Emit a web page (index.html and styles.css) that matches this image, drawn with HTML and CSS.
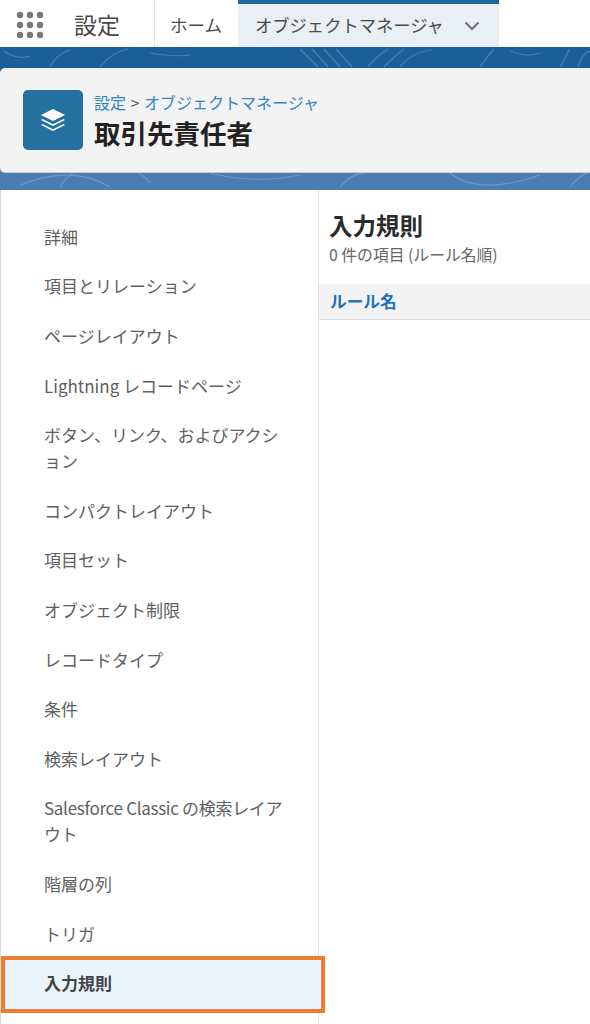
FILE: index.html
```html
<html lang="ja">

<head>
    <meta charset="UTF-8">
    <title>設定</title>
    <link rel="stylesheet" href="styles.css">
</head>

<body>
    <div class="topbar">
        <div class="launcher">
            <svg width="30" height="30" viewBox="0 0 30 30">
                <g fill="#787878">
                    <circle cx="5" cy="5" r="3.2"/><circle cx="15" cy="5" r="3.2"/><circle cx="25" cy="5" r="3.2"/>
                    <circle cx="5" cy="15" r="3.2"/><circle cx="15" cy="15" r="3.2"/><circle cx="25" cy="15" r="3.2"/>
                    <circle cx="5" cy="25" r="3.2"/><circle cx="15" cy="25" r="3.2"/><circle cx="25" cy="25" r="3.2"/>
                </g>
            </svg>
        </div>
        <div class="app-name">設定</div>
        <div class="tab">ホーム</div>
        <div class="tab tab-active">
            <span>オブジェクトマネージャ</span>
            <svg class="chevron" width="16" height="10" viewBox="0 0 16 10">
                <path d="M1.5 1.5 L8 8 L14.5 1.5" fill="none" stroke="#6b6f73" stroke-width="2"/>
            </svg>
        </div>
    </div>

    <div class="stage">
        <svg class="contours" width="590" height="143" viewBox="0 0 590 143">
            <g fill="none" stroke="#ffffff" stroke-opacity="0.2" stroke-width="1.2">
                <path d="M4 4 C12 10 20 12 30 9 M50 20 C54 12 60 6 70 3 M100 20 C108 10 118 4 128 2 M150 6 C162 8 176 10 190 8"/>
                <path d="M300 2 L318 20 M312 2 L328 20 M324 2 L340 20 M336 2 L352 20 M368 20 C374 12 382 6 388 2 M384 20 C392 12 398 6 404 2 M400 20 C408 10 420 4 432 3"/>
                <path d="M480 20 C486 12 490 6 494 2 M510 4 C520 8 530 10 540 6 M560 20 C566 12 566 6 570 2 M578 20 C580 12 584 6 590 4"/>
                <path d="M20 138 C60 122 90 128 110 140 M60 140 C76 110 130 110 150 136 M210 126 C240 134 270 134 300 128 M340 140 C350 128 360 124 372 126 M450 126 C470 142 500 142 540 128 M570 140 C578 130 584 126 590 124"/>
            </g>
        </svg>

        <div class="page-head">
            <div class="object-icon">
                <svg width="28" height="28" viewBox="0 0 28 28">
                    <path d="M14 3 L26 9 L14 15 L2 9 Z" fill="#fff"/>
                    <path d="M3.5 13 L14 18.2 L24.5 13 L26 14 L14 20 L2 14 Z" fill="#fff"/>
                    <path d="M3.5 18 L14 23.2 L24.5 18 L26 19 L14 25 L2 19 Z" fill="#fff"/>
                </svg>
            </div>
            <div class="head-text">
                <div class="crumbs"><a>設定</a> <span class="sep">&gt;</span> <a>オブジェクトマネージャ</a></div>
                <div class="object-title">取引先責任者</div>
            </div>
        </div>

        <div class="content">
            <ul class="side-nav">
                <li>詳細</li>
                <li>項目とリレーション</li>
                <li>ページレイアウト</li>
                <li>Lightning レコードページ</li>
                <li>ボタン、リンク、およびアクション</li>
                <li>コンパクトレイアウト</li>
                <li>項目セット</li>
                <li>オブジェクト制限</li>
                <li>レコードタイプ</li>
                <li>条件</li>
                <li>検索レイアウト</li>
                <li class="latin-tight">Salesforce Classic の検索レイアウト</li>
                <li>階層の列</li>
                <li>トリガ</li>
                <li class="current">入力規則</li>
            </ul>
            <div class="main">
                <div class="main-head">
                    <h2>入力規則</h2>
                    <p>0 件の項目 (ルール名順)</p>
                </div>
                <div class="table-head">ルール名</div>
            </div>
        </div>
    </div>
</body>

</html>
```

FILE: styles.css
```css
* {
    box-sizing: border-box;
}

body {
    margin: 0;
    width: 590px;
    height: 1024px;
    overflow: hidden;
    background: #fff;
    font-family: "Noto Sans CJK JP", "Noto Sans", sans-serif;
    color: #606060;
}

.topbar {
    display: flex;
    height: 47px;
    background: #fff;
}

.launcher {
    width: 74px;
    padding: 10px 0 0 15px;
}

.app-name {
    width: 80px;
    font-size: 23px;
    line-height: 48px;
    color: #4a4a4a;
}

.tab {
    width: 84px;
    border-left: 1px solid #e4e4e4;
    font-size: 17.5px;
    line-height: 50px;
    padding-left: 15px;
    color: #4a4a4a;
}

.tab-active {
    display: flex;
    align-items: flex-start;
    width: 261px;
    background: #e9eff3;
    border-top: 4px solid #20699c;
    border-left: 0;
    padding-left: 17px;
    font-size: 17.3px;
    line-height: 42px;
    white-space: nowrap;
}

.chevron {
    margin: 17px 0 0 20px;
}

.stage {
    position: relative;
    height: 977px;
    padding-top: 21px;
    background: linear-gradient(#1a5f98 0, #1a5f98 20px, #4a7db3 100px, #4a7db3 143px);
}

.contours {
    position: absolute;
    left: 0;
    top: 0;
}

.page-head {
    position: relative;
    display: flex;
    align-items: center;
    gap: 11px;
    height: 105px;
    padding-left: 23px;
    background: #f3f3f3;
    border-radius: 5px 0 0 5px;
    border-bottom: 1px solid #c9c9c9;
}

.object-icon {
    display: flex;
    align-items: center;
    justify-content: center;
    width: 60px;
    height: 60px;
    background: #24709f;
    border-radius: 5px;
}

.head-text {
    display: flex;
    flex-direction: column;
    gap: 6px;
}

.crumbs {
    font-size: 16px;
    line-height: 20px;
    white-space: nowrap;
}

.crumbs a {
    color: #2e86c9;
}

.sep {
    margin: 0 1px;
    color: #666;
}

.object-title {
    font-size: 26.5px;
    line-height: 30px;
    font-weight: 700;
    color: #222;
}

.content {
    position: relative;
    display: flex;
    height: 834px;
    margin-top: 17px;
    background: #fff;
    border-left: 1px solid #d8d8d8;
}

.side-nav {
    width: 318px;
    margin: 0;
    padding: 22px 0 0;
    list-style: none;
    border-right: 1px solid #e2e2e2;
}

.side-nav li {
    padding: 11.8px 23px 11.8px 43px;
    font-size: 17px;
    line-height: 26px;
}

.side-nav li.latin-tight {
    letter-spacing: -0.3px;
}

.side-nav li.current {
    position: relative;
    margin-right: -3px;
    padding-bottom: 13px;
    background: #eaf4fd;
    font-weight: 700;
    color: #444;
}

.side-nav li.current::after {
    content: "";
    position: absolute;
    left: 0;
    right: -4px;
    top: -2px;
    bottom: -4px;
    border: 4px solid #ed7d31;
}

.main {
    flex: 1;
}

.main-head {
    padding: 20px 10px 0;
    height: 94px;
}

.main-head h2 {
    margin: 0;
    font-size: 23.5px;
    line-height: 30px;
    font-weight: 700;
    color: #2b2b2b;
}

.main-head p {
    margin: 5px 0 0;
    font-size: 15.8px;
    line-height: 20px;
    color: #666;
}

.table-head {
    height: 36px;
    padding-left: 11px;
    background: #f3f3f3;
    border-bottom: 1px solid #e0e0e0;
    font-size: 16.7px;
    line-height: 34px;
    font-weight: 700;
    color: #1c74bd;
}
```
